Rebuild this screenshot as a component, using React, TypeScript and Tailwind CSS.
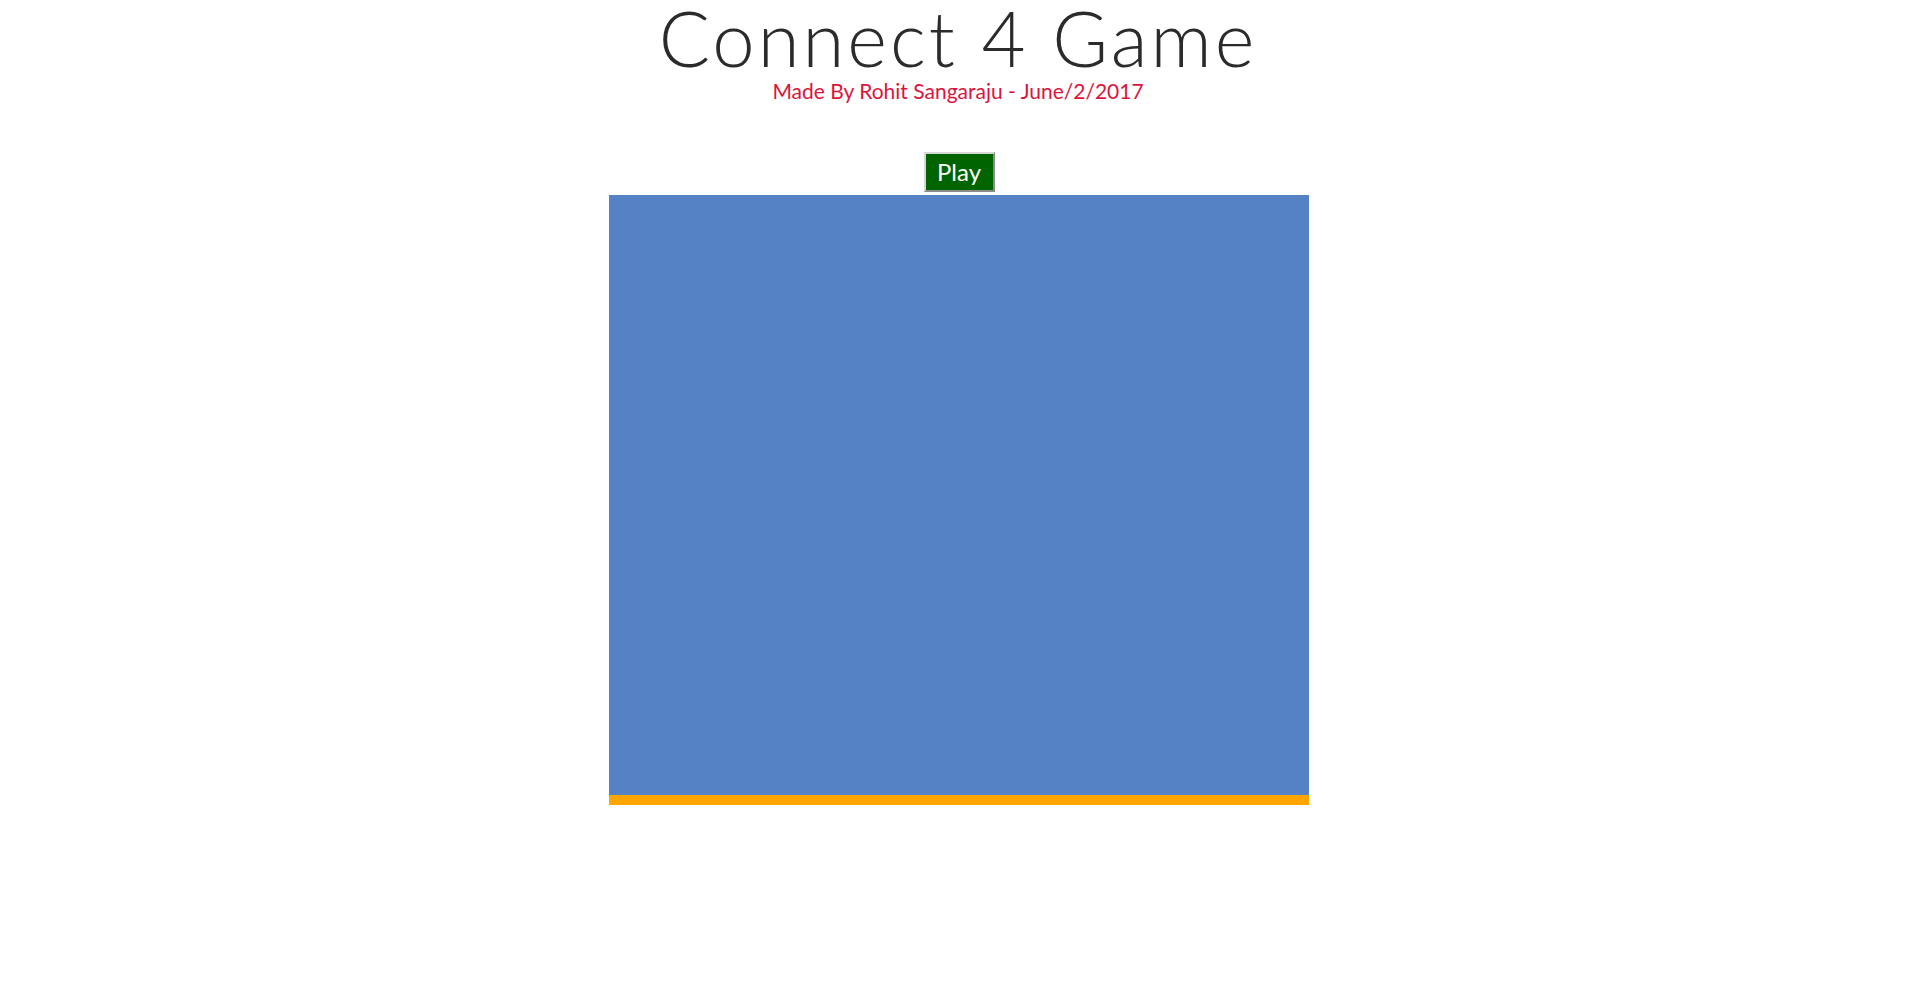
export default function App() {
  return (
    <div className="flex min-h-screen flex-col items-center bg-white font-['Lato','Open_Sans',sans-serif]">
      <h1 className="m-0 text-[76px] font-light leading-[76px] tracking-[3px] text-[#2b2b2b]">Connect 4 Game</h1>
      <p className="m-0 text-[21px] leading-[30px] text-[#dc143c]">Made By Rohit Sangaraju - June/2/2017</p>
      <button className="mt-[46px] ml-[2px] h-[40px] w-[71px] border-2 border-t-[#d8d8d8] border-l-[#d8d8d8] border-r-[#8a8a8a] border-b-[#8a8a8a] bg-[#006400] text-[24px] leading-none text-white">
        Play
      </button>
      <div className="mt-[3px] ml-[2px] h-[610px] w-[700px] border-b-[10px] border-[#ffa500] bg-[#5581c5]" />
    </div>
  );
}
